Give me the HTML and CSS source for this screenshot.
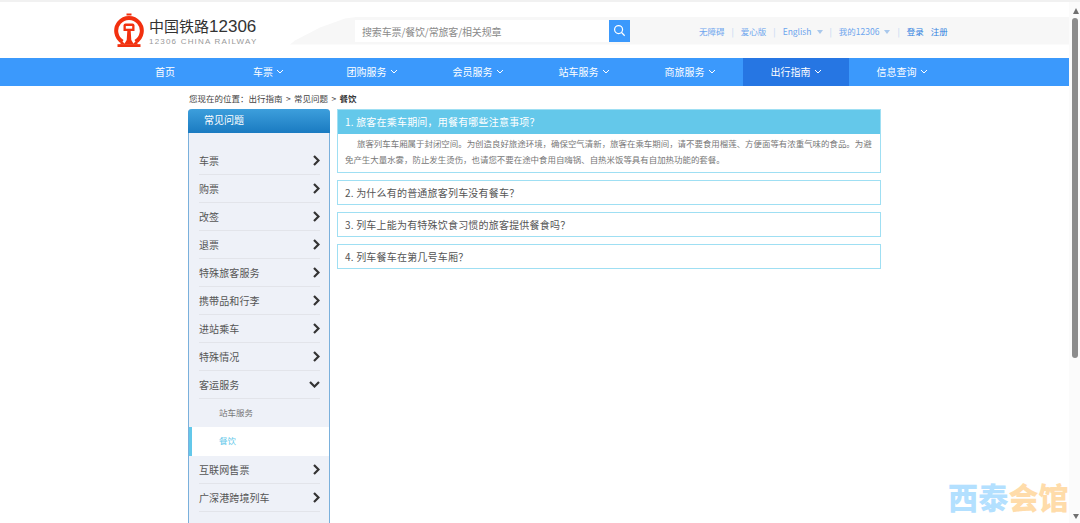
FILE: index.html
```html
<!DOCTYPE html>
<html lang="zh-CN">
<head>
  <meta charset="UTF-8">
  <title>常见问题 - 餐饮</title>
  <link rel="stylesheet" href="styles.css">
</head>
<body>
  <div class="window">
    <div class="page">
      <div class="header">
        <div class="logo">
          <svg class="logo-mark" viewBox="0 0 30 34" width="30" height="34">
            <path d="M12.500 0.500h5v2h-5z" fill="#f2300f"/>
            <path d="M8.500 28.800A12.800 12.800 0 1 1 21.500 28.800" fill="none" stroke="#f2300f" stroke-width="4"/>
            <path d="M3.500 31.200h23v2.800h-23z" fill="#f2300f"/>
            <path d="M8.500 28.500l-3 3h6zM21.500 28.500l3 3h-6z" fill="#f2300f"/>
            <path d="M9.500 12.500a2 2 0 0 1 2-2h7a2 2 0 0 1 2 2v5.500h-11z" fill="#f2300f"/>
            <path d="M11.800 13h6.400v2.700h-6.400z" fill="#fff"/>
            <path d="M13.300 18h3.400l.6 9 2.700 4.500h-10.000l2.700-4.500z" fill="#f2300f"/>
          </svg>
          <div class="logo-text">
            <div class="logo-cn">中国铁路<span class="logo-num">12306</span></div>
            <div class="logo-en">12306 CHINA RAILWAY</div>
          </div>
        </div>
        <div class="header-band">
          <div class="search">
            <div class="search-input">搜索车票/餐饮/常旅客/相关规章</div>
            <div class="search-btn">
              <svg viewBox="0 0 14 14" width="13" height="13"><circle cx="6" cy="6" r="4.300" fill="none" stroke="#fff" stroke-width="1.300"/><path d="M9.200 9.200l3.400 3.400" stroke="#fff" stroke-width="1.300"/></svg>
            </div>
          </div>
          <div class="top-links">
            <span>无障碍</span><i>|</i>
            <span>爱心版</span><i>|</i>
            <span>English<b class="caret"></b></span><i>|</i>
            <span>我的12306<b class="caret"></b></span><i>|</i>
            <span class="strong">登录</span>
            <span class="strong">注册</span>
          </div>
        </div>
      </div>

      <div class="nav">
        <div class="nav-inner">
          <a class="nav-item first">首页</a>
          <a class="nav-item second">车票<svg class="chev" viewBox="0 0 8 5"><path d="M1 1l3 3 3-3"/></svg></a>
          <a class="nav-item">团购服务<svg class="chev" viewBox="0 0 8 5"><path d="M1 1l3 3 3-3"/></svg></a>
          <a class="nav-item">会员服务<svg class="chev" viewBox="0 0 8 5"><path d="M1 1l3 3 3-3"/></svg></a>
          <a class="nav-item">站车服务<svg class="chev" viewBox="0 0 8 5"><path d="M1 1l3 3 3-3"/></svg></a>
          <a class="nav-item">商旅服务<svg class="chev" viewBox="0 0 8 5"><path d="M1 1l3 3 3-3"/></svg></a>
          <a class="nav-item active">出行指南<svg class="chev" viewBox="0 0 8 5"><path d="M1 1l3 3 3-3"/></svg></a>
          <a class="nav-item">信息查询<svg class="chev" viewBox="0 0 8 5"><path d="M1 1l3 3 3-3"/></svg></a>
        </div>
      </div>

      <div class="content">
        <div class="crumbs">您现在的位置：出行指南 &gt; 常见问题 &gt; <b>餐饮</b></div>
        <div class="columns">
          <div class="sidebar">
            <div class="side-title">常见问题</div>
            <div class="side-list">
              <div class="side-item">车票<svg class="arrow" viewBox="0 0 7 11"><path d="M1 1l4.500 4.500L1 10"/></svg></div>
              <div class="side-item">购票<svg class="arrow" viewBox="0 0 7 11"><path d="M1 1l4.500 4.500L1 10"/></svg></div>
              <div class="side-item">改签<svg class="arrow" viewBox="0 0 7 11"><path d="M1 1l4.500 4.500L1 10"/></svg></div>
              <div class="side-item">退票<svg class="arrow" viewBox="0 0 7 11"><path d="M1 1l4.500 4.500L1 10"/></svg></div>
              <div class="side-item">特殊旅客服务<svg class="arrow" viewBox="0 0 7 11"><path d="M1 1l4.500 4.500L1 10"/></svg></div>
              <div class="side-item">携带品和行李<svg class="arrow" viewBox="0 0 7 11"><path d="M1 1l4.500 4.500L1 10"/></svg></div>
              <div class="side-item">进站乘车<svg class="arrow" viewBox="0 0 7 11"><path d="M1 1l4.500 4.500L1 10"/></svg></div>
              <div class="side-item">特殊情况<svg class="arrow" viewBox="0 0 7 11"><path d="M1 1l4.500 4.500L1 10"/></svg></div>
              <div class="side-item">客运服务<svg class="arrow-down" viewBox="0 0 11 7"><path d="M1 1l4.500 4.500L10 1"/></svg></div>
              <div class="side-sub">站车服务</div>
              <div class="side-sub current">餐饮</div>
              <div class="side-item">互联网售票<svg class="arrow" viewBox="0 0 7 11"><path d="M1 1l4.500 4.500L1 10"/></svg></div>
              <div class="side-item">广深港跨境列车<svg class="arrow" viewBox="0 0 7 11"><path d="M1 1l4.500 4.500L1 10"/></svg></div>
            </div>
          </div>
          <div class="faq">
            <div class="faq-box">
              <div class="faq-q open">1. 旅客在乘车期间，用餐有哪些注意事项？</div>
              <div class="faq-a">旅客列车车厢属于封闭空间。为创造良好旅途环境，确保空气清新，旅客在乘车期间，请不要食用榴莲、方便面等有浓重气味的食品。为避免产生大量水雾，防止发生烫伤，也请您不要在途中食用自嗨锅、自热米饭等具有自加热功能的套餐。</div>
            </div>
            <div class="faq-box"><div class="faq-q">2. 为什么有的普通旅客列车没有餐车？</div></div>
            <div class="faq-box"><div class="faq-q">3. 列车上能为有特殊饮食习惯的旅客提供餐食吗？</div></div>
            <div class="faq-box"><div class="faq-q">4. 列车餐车在第几号车厢？</div></div>
          </div>
        </div>
      </div>
    </div>
    <div class="scrollbar">
      <div class="sb-up"></div>
      <div class="sb-thumb"></div>
      <div class="sb-down"></div>
    </div>
    <div class="watermark"><span>西泰</span><span class="orange">会馆</span></div>
  </div>
</body>
</html>
```

FILE: styles.css
```css
* {
  box-sizing: border-box;
}

html, body {
  margin: 0;
  padding: 0;
  height: 523px;
  overflow: hidden;
}

body {
  font-family: "Noto Sans CJK SC", "Noto Sans", sans-serif;
  background-color: #fff;
  color: #555;
}

.window {
  position: relative;
  display: flex;
  height: 523px;
  padding-top: 2px;
  background-color: #f1f1f1;
}

.page {
  flex: 1;
  min-width: 0;
  background-color: #fff;
  overflow: hidden;
}

/* header */
.header {
  display: flex;
  align-items: center;
  height: 56px;
}

.logo {
  display: flex;
  align-items: center;
  width: 176px;
  margin-left: 114px;
}

.logo-mark {
  flex: none;
  margin-right: 5px;
}

.logo-text {
  padding-top: 3px;
}

.logo-cn {
  font-size: 15px;
  line-height: 20px;
  color: #333;
  white-space: nowrap;
}

.logo-num {
  font-family: "Liberation Sans", sans-serif;
  font-size: 17px;
}

.logo-en {
  font-family: "Liberation Sans", sans-serif;
  font-size: 8px;
  line-height: 10px;
  letter-spacing: 1.200px;
  color: #999;
  white-space: nowrap;
}

.header-band {
  display: flex;
  align-items: center;
  flex: 1;
  height: 28px;
  margin-top: 1px;
  padding-left: 65px;
  background-color: #f7f7f7;
  clip-path: polygon(0 28px, 5px 24px, 30px 11px, 55px 2px, 70px 0, 100% 0, 100% 100%);
}

.search {
  display: flex;
  width: 275px;
  height: 22px;
}

.search-input {
  flex: 1;
  padding: 1px 0 0 7px;
  font-size: 10px;
  line-height: 21px;
  letter-spacing: -.15px;
  color: #8a8a8a;
  background-color: #fff;
}

.search-btn {
  display: flex;
  align-items: center;
  justify-content: center;
  width: 21px;
  background-color: #3b99fc;
}

.top-links {
  display: flex;
  align-items: center;
  margin-left: 69px;
  font-size: 8.500px;
  color: #6ea6ee;
  white-space: nowrap;
}

.top-links i {
  margin: 0 7px;
  font-style: normal;
  color: #bcd6f2;
}

.top-links .strong {
  margin-right: 7px;
  color: #2f7fe0;
}

.caret {
  display: inline-block;
  margin-left: 5px;
  vertical-align: middle;
  border-top: 4px solid #a9c8ec;
  border-left: 3.500px solid transparent;
  border-right: 3.500px solid transparent;
}

/* nav */
.nav {
  height: 28px;
  background-color: #3b99fc;
}

.nav-inner {
  display: flex;
  margin-left: 107px;
}

.nav-item {
  display: flex;
  align-items: center;
  justify-content: center;
  width: 106px;
  height: 28px;
  padding-bottom: 1px;
  font-size: 10px;
  color: #fff;
}

.nav-item.first {
  padding-left: 10px;
}

.nav-item.second {
  padding-left: 5px;
}

.nav-item.active {
  background-color: #2676e3;
}

.chev {
  width: 8px;
  height: 5px;
  margin-left: 3px;
  fill: none;
  stroke: #fff;
  stroke-width: 1;
}

/* content */
.content {
  width: 693px;
  margin-left: 188px;
}

.crumbs {
  height: 23px;
  padding-left: 1px;
  font-size: 8.500px;
  line-height: 24px;
  word-spacing: 1.500px;
  color: #444;
}

.crumbs b {
  color: #333;
}

.columns {
  display: flex;
  align-items: flex-start;
  gap: 7px;
}

.sidebar {
  flex: none;
  width: 142px;
  border: 1px solid #7ab0dc;
  border-top: 0;
  border-radius: 4px 4px 0 0;
  background-color: #eef1f8;
}

.side-title {
  height: 24px;
  margin: 0 -1px;
  padding-left: 16px;
  font-size: 10px;
  line-height: 22px;
  color: #fff;
  border-radius: 4px 4px 0 0;
  background: linear-gradient(#3d9fdc, #1a7bc1);
}

.side-list {
  padding: 14px 0 20px;
}

.side-item {
  display: flex;
  align-items: center;
  justify-content: space-between;
  height: 28px;
  margin: 0 9px 0 10px;
  font-size: 10px;
  letter-spacing: .1px;
  color: #555;
  border-bottom: 1px solid #e2e4ea;
}

.arrow {
  width: 7px;
  height: 11px;
  fill: none;
  stroke: #333;
  stroke-width: 2.200;
}

.arrow-down {
  width: 11px;
  height: 7px;
  fill: none;
  stroke: #333;
  stroke-width: 2.200;
}

.side-sub {
  height: 28px;
  padding-left: 30px;
  font-size: 8.500px;
  line-height: 27px;
  color: #777;
}

.side-sub.current {
  height: 29px;
  padding-left: 27px;
  color: #63c8ea;
  background-color: #fff;
  border-left: 3px solid #63c8ea;
}

.faq {
  flex: 1;
  display: flex;
  flex-direction: column;
  gap: 7px;
}

.faq-box {
  border: 1px solid #9fdff3;
}

.faq-q {
  height: 23px;
  padding-left: 7px;
  font-size: 10px;
  line-height: 23px;
  letter-spacing: .2px;
  color: #555;
}

.faq-q.open {
  height: 24px;
  color: #fff;
  background-color: #64c8ea;
}

.faq-a {
  padding: 1px 4px 5px 7px;
  font-size: 8.450px;
  line-height: 16px;
  text-indent: 12px;
  color: #777;
}

/* fake browser scrollbar */
.scrollbar {
  display: flex;
  flex-direction: column;
  flex: none;
  width: 11px;
  background-color: #fbfbfb;
}

.sb-up, .sb-down {
  display: flex;
  align-items: center;
  justify-content: center;
  height: 14px;
  padding-left: 2px;
}

.sb-up {
  margin-top: 2px;
}

.sb-up::before {
  content: "";
  border-bottom: 6px solid #707070;
  border-left: 3.500px solid transparent;
  border-right: 3.500px solid transparent;
}

.sb-thumb {
  width: 6px;
  height: 340px;
  margin-left: 3px;
  border-radius: 3px;
  background-color: #8c8c8c;
}

.sb-down {
  margin-top: auto;
}

.sb-down::before {
  content: "";
  border-top: 5px solid #707070;
  border-left: 3px solid transparent;
  border-right: 3px solid transparent;
}

.watermark {
  position: absolute;
  left: 948px;
  bottom: 10px;
  font-size: 30px;
  font-weight: 900;
  line-height: 34px;
  letter-spacing: .2px;
  color: #b3e0ff;
  white-space: nowrap;
}

.watermark .orange {
  color: #ffdcaa;
}
```
